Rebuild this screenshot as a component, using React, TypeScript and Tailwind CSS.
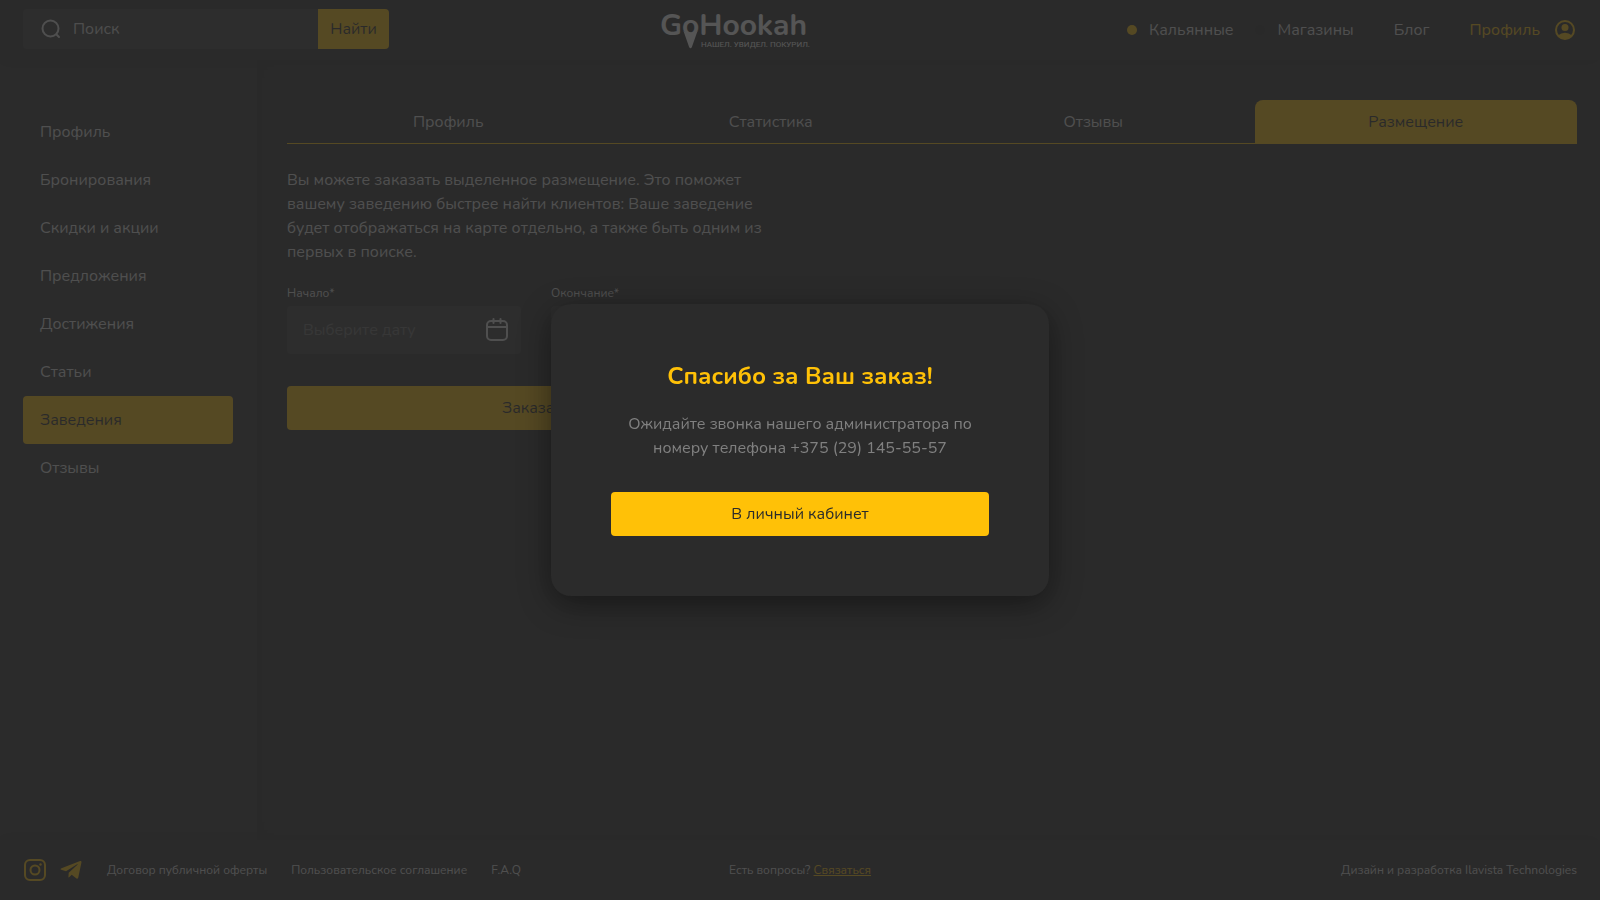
import { FaTelegramPlane } from 'react-icons/fa';

const sections = [
  'Профиль',
  'Бронирования',
  'Скидки и акции',
  'Предложения',
  'Достижения',
  'Статьи',
  'Заведения',
  'Отзывы',
];

const tabs = ['Профиль', 'Статистика', 'Отзывы', 'Размещение'];

function Logo() {
  return (
    <a href="#home" aria-label="GoHookah" className="block text-white">
      <svg width="148" height="40" viewBox="0 0 148 40" fill="currentColor" className="overflow-visible">
        <text x="0" y="25" className="font-['Nunito','Roboto',sans-serif] text-[30px] font-bold">
          GoHookah
        </text>
        <path d="M23.500 21 Q30 27.500 37.500 21 L31.900 37 Q30.500 39.600 29.100 37 Z" />
        <text x="41" y="37" className="font-['Roboto',sans-serif] text-[8px]">
          НАШЕЛ. УВИДЕЛ. ПОКУРИЛ.
        </text>
      </svg>
    </a>
  );
}

function SearchIcon() {
  return (
    <svg width="20" height="20" viewBox="0 0 20 20" fill="none" stroke="currentColor" strokeWidth="2" strokeLinecap="round">
      <circle cx="9.500" cy="9.500" r="8" />
      <path d="M15.500 15.500L18 18" />
    </svg>
  );
}

function CalendarIcon() {
  return (
    <svg width="24" height="24" viewBox="0 0 24 24" fill="none" stroke="currentColor" strokeWidth="2" strokeLinecap="round">
      <rect x="2" y="3" width="20" height="19" rx="4" />
      <path d="M2 9h20M8.500 1v4M15.500 1v4" />
    </svg>
  );
}

function AccountIcon() {
  return (
    <svg width="24" height="24" viewBox="0 0 24 24" fill="currentColor">
      <circle cx="12" cy="12" r="9" fill="none" stroke="currentColor" strokeWidth="2" />
      <circle cx="12" cy="9.500" r="3.500" />
      <path d="M5 17.500Q8 14.800 12 14.800T19 17.500Q16.500 21 12 21T5 17.500Z" />
    </svg>
  );
}

function InstagramIcon() {
  return (
    <svg width="24" height="24" viewBox="0 0 24 24" fill="none" stroke="currentColor" strokeWidth="2">
      <rect x="2" y="2" width="20" height="20" rx="5" />
      <circle cx="12" cy="12" r="4.500" />
      <circle cx="17.500" cy="6.500" r="1.200" fill="currentColor" stroke="none" />
    </svg>
  );
}

function Header() {
  return (
    <header className="relative z-10 flex h-[60px] items-center justify-between bg-[#2b2b2b] px-[23px] shadow-[0_0_16px_rgba(0,0,0,0.25)]">
      <form className="mt-[9px] flex h-10 w-[366px] self-start" onSubmit={(e) => e.preventDefault()}>
        <label className="flex flex-1 items-center gap-3 rounded-l bg-[#3a3a3a] pl-[18px]">
          <span className="shrink-0">
            <SearchIcon />
          </span>
          <input
            type="search"
            aria-label="Поиск"
            placeholder="Поиск"
            className="w-full min-w-0 bg-transparent outline-none placeholder:text-[#d8d8d8]"
          />
        </label>
        <button className="w-[71px] rounded-r bg-[#ffc107] text-[#2b2b2b]">Найти</button>
      </form>
      <Logo />
      <nav className="flex items-center gap-10 pl-12">
        <div className="flex items-center gap-[22px]">
          <a href="#hookahs" className="flex items-center gap-3">
            <span className="size-2.5 rounded-full bg-[#ffc107]" />
            Кальянные
          </a>
          <a href="#shops" className="flex items-center gap-3">
            <span className="size-2.5 rounded-full bg-[#242424]" />
            Магазины
          </a>
        </div>
        <a href="#blog">Блог</a>
        <a href="#profile" className="flex items-center gap-[13px] text-[#ffc107]">
          Профиль
          <AccountIcon />
        </a>
      </nav>
    </header>
  );
}

function Sidebar() {
  return (
    <aside className="w-[257px] shrink-0 bg-[#2f2f2f] px-[23px] pt-12 shadow-[0_0_16px_rgba(0,0,0,0.25)]">
      <nav className="flex w-[210px] flex-col">
        {sections.map((name) => (
          <a
            key={name}
            href="#section"
            className={
              name === 'Заведения'
                ? 'flex h-12 items-center rounded bg-[#ffc107] px-[17px] text-[#2b2b2b]'
                : 'flex h-12 items-center rounded px-[17px]'
            }
          >
            {name}
          </a>
        ))}
      </nav>
    </aside>
  );
}

function DateField({ id, label }: { id: string; label: string }) {
  return (
    <div className="flex-1">
      <label htmlFor={id} className="mb-1 block text-xs leading-[18px]">
        {label}
      </label>
      <div className="flex h-12 items-center rounded bg-[#3a3a3a] pr-3 pl-4">
        <input
          id={id}
          placeholder="Выберите дату"
          className="w-full min-w-0 bg-transparent outline-none placeholder:text-[#6a6a6a]"
        />
        <span className="shrink-0">
          <CalendarIcon />
        </span>
      </div>
    </div>
  );
}

function Placement() {
  return (
    <main className="flex-1 pt-10 pr-[23px] pl-[30px]">
      <div role="tablist" className="grid h-11 grid-cols-4 border-b border-[#ffc107]">
        {tabs.map((name) => (
          <button
            key={name}
            role="tab"
            aria-selected={name === 'Размещение'}
            className={name === 'Размещение' ? 'rounded-t-lg bg-[#ffc107] text-[#2b2b2b]' : ''}
          >
            {name}
          </button>
        ))}
      </div>
      <form className="mt-6 max-w-[498px]" onSubmit={(e) => e.preventDefault()}>
        <p className="mb-5">
          Вы можете заказать выделенное размещение. Это поможет вашему заведению быстрее найти клиентов: Ваше
          заведение будет отображаться на карте отдельно, а также быть одним из первых в поиске.
        </p>
        <div className="flex gap-[30px]">
          <DateField id="date-start" label="Начало*" />
          <DateField id="date-end" label="Окончание*" />
        </div>
        <button className="mt-8 h-11 w-full rounded bg-[#ffc107] text-[#2b2b2b]">Заказать</button>
      </form>
    </main>
  );
}

function Footer() {
  return (
    <footer className="relative grid h-[60px] grid-cols-[1fr_auto_1fr] items-center bg-[#2b2b2b] px-[23px] text-xs shadow-[0_0_16px_rgba(0,0,0,0.25)]">
      <div className="flex items-center gap-6">
        <div className="flex gap-3 text-[#ffc107]">
          <a href="#instagram" aria-label="Instagram">
            <InstagramIcon />
          </a>
          <a href="#telegram" aria-label="Telegram">
            <FaTelegramPlane className="size-6" />
          </a>
        </div>
        <a href="#offer">Договор публичной оферты</a>
        <a href="#terms">Пользовательское соглашение</a>
        <a href="#faq">F.A.Q</a>
      </div>
      <p>
        Есть вопросы?{' '}
        <a href="#contact" className="text-[#ffc107] underline">
          Связаться
        </a>
      </p>
      <p className="text-right">Дизайн и разработка Ilavista Technologies</p>
    </footer>
  );
}

function ThanksDialog() {
  return (
    <div className="fixed inset-0 z-20 flex items-center justify-center bg-[#2b2b2b]/80">
      <section
        role="dialog"
        aria-modal="true"
        aria-labelledby="thanks-title"
        className="w-[498px] rounded-[20px] bg-[#2b2b2b] p-[60px] text-center shadow-[0_8px_32px_rgba(0,0,0,0.45)]"
      >
        <h2 id="thanks-title" className="text-2xl leading-6 font-bold text-[#ffc107]">
          Спасибо за Ваш заказ!
        </h2>
        <p className="mt-6 text-[#808080]">Ожидайте звонка нашего администратора по номеру телефона +375 (29) 145-55-57</p>
        <button className="mt-8 h-11 w-full rounded bg-[#ffc107] text-[#2b2b2b]">В личный кабинет</button>
      </section>
    </div>
  );
}

export default function App() {
  return (
    <div className="flex min-h-screen flex-col bg-[#2b2b2b] font-['Nunito','Roboto',sans-serif] text-base text-[#dedede]">
      <Header />
      <div className="flex flex-1">
        <Sidebar />
        <Placement />
      </div>
      <Footer />
      <ThanksDialog />
    </div>
  );
}
